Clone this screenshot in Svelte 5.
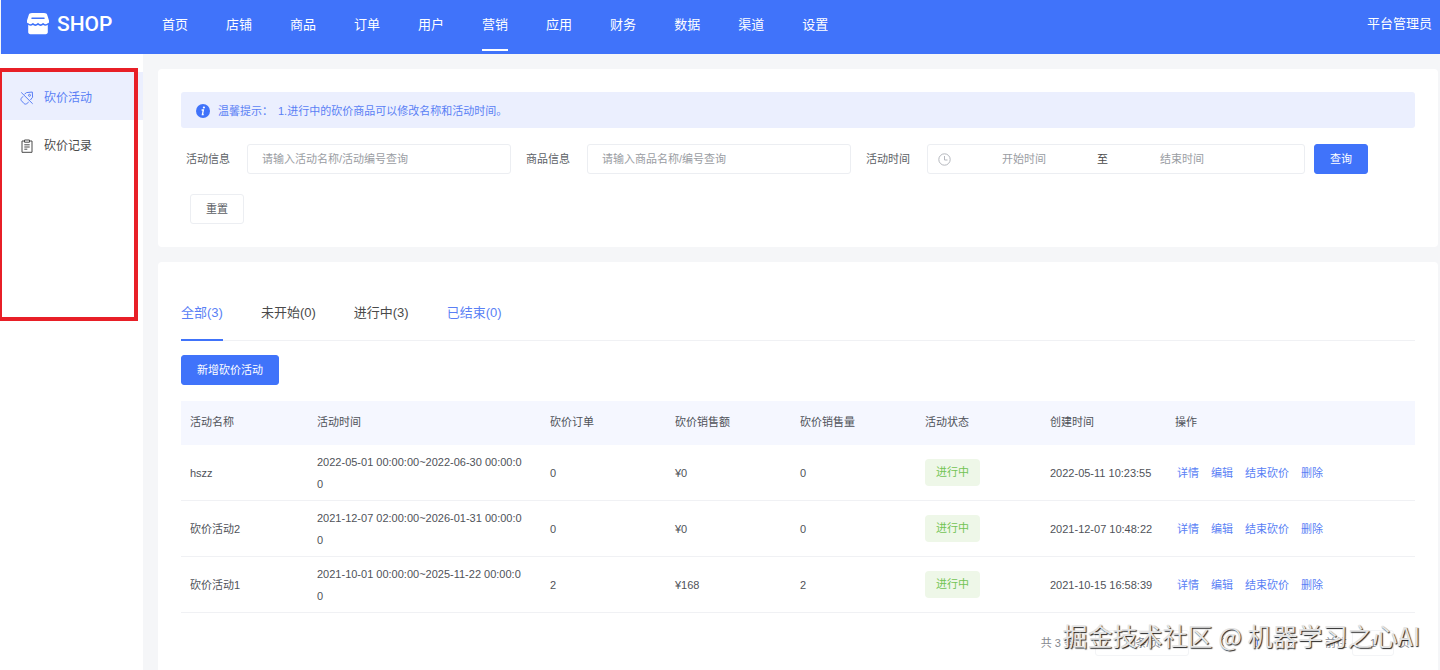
<script lang="ts">
	interface Activity {
		name: string;
		time: string;
		orders: number;
		amount: string;
		sales: number;
		status: string;
		created: string;
	}

	const navItems = ['首页', '店铺', '商品', '订单', '用户', '营销', '应用', '财务', '数据', '渠道', '设置'];
	const columns = ['活动名称', '活动时间', '砍价订单', '砍价销售额', '砍价销售量', '活动状态', '创建时间', '操作'];
	const actions = ['详情', '编辑', '结束砍价', '删除'];

	const tabs = [
		{ key: 'all', label: '全部(3)' },
		{ key: 'pending', label: '未开始(0)' },
		{ key: 'active', label: '进行中(3)' },
		{ key: 'ended', label: '已结束(0)' }
	];

	const activities: Activity[] = [
		{
			name: 'hszz',
			time: '2022-05-01 00:00:00~2022-06-30 00:00:00',
			orders: 0,
			amount: '¥0',
			sales: 0,
			status: '进行中',
			created: '2022-05-11 10:23:55'
		},
		{
			name: '砍价活动2',
			time: '2021-12-07 02:00:00~2026-01-31 00:00:00',
			orders: 0,
			amount: '¥0',
			sales: 0,
			status: '进行中',
			created: '2021-12-07 10:48:22'
		},
		{
			name: '砍价活动1',
			time: '2021-10-01 00:00:00~2025-11-22 00:00:00',
			orders: 2,
			amount: '¥168',
			sales: 2,
			status: '进行中',
			created: '2021-10-15 16:58:39'
		}
	];

	let activeNav = $state('营销');
	let activeTab = $state('all');
	let activityQuery = $state('');
	let goodsQuery = $state('');
	let startTime = $state('');
	let endTime = $state('');

	function resetFilters() {
		activityQuery = '';
		goodsQuery = '';
		startTime = '';
		endTime = '';
	}
</script>

<div class="app">
	<!-- Top bar -->
	<header class="topbar">
		<a class="brand" href="#home">
			<svg width="22" height="22" viewBox="0 0 22 22" aria-hidden="true">
				<path
					fill="#fff"
					d="M5 0h12c2 0 3 .8 3.400 2.400L22 7.500v1.300c0 1-.5 1.700-1.200 2.100V19c0 1.400-.8 2.200-2.200 2.200H3.400C2 21.200 1.200 20.400 1.200 19v-8.100C.5 10.500 0 9.800 0 8.800V7.500l1.600-5.100C2 .8 3 0 5 0z"
				/>
				<path
					fill="none"
					stroke="#4073fa"
					stroke-width="1.500"
					stroke-linecap="round"
					d="M5 5.200h12M.8 10.800c1.700 1.500 3.600 1.400 5.100.1 1.500 1.500 3.500 1.500 5.100 0 1.600 1.500 3.600 1.500 5.100 0 1.500 1.300 3.400 1.400 5.100-.1"
				/>
			</svg>
			<span>SHOP</span>
		</a>
		<nav class="main-nav">
			{#each navItems as item}
				<a href="#nav" class:active={item === activeNav} onclick={() => (activeNav = item)}>{item}</a>
			{/each}
		</nav>
		<span class="user">平台管理员</span>
	</header>

	<div class="body">
		<!-- Side menu -->
		<aside class="sidebar">
			<a class="side-item active" href="#activity">
				<svg width="14" height="14" viewBox="0 0 14 14" fill="none" stroke="currentColor" aria-hidden="true">
					<path d="M4.500 3.200 6.500 1.600 12.300 1l.3 5.200-2.200 2.800M8.700 11 6.800 12.600c-.9.700-1.900.7-2.700 0L1.500 9.800c-.8-.9-.8-1.900 0-2.700L3 5.300M1.200 1.400l11.500 11.400" />
					<circle cx="9.500" cy="4.300" r="1" />
				</svg>
				<span>砍价活动</span>
			</a>
			<a class="side-item" href="#records">
				<svg width="14" height="14" viewBox="0 0 14 14" fill="none" stroke="currentColor" aria-hidden="true">
					<path d="M4.500 2H2v11.300h10V2H9.500M4.500 1h5v2.200h-5zM4.300 5.800h5.400M4.300 8h5.400M4.300 10.200h3" />
				</svg>
				<span>砍价记录</span>
			</a>
			<div class="highlight"></div>
		</aside>

		<main class="content">
			<!-- Filters -->
			<section class="card">
				<div class="notice">
					<svg width="14" height="14" viewBox="0 0 14 14" aria-hidden="true">
						<circle cx="7" cy="7" r="7" fill="#4073fa" />
						<circle cx="7.900" cy="3.500" r="1.100" fill="#fff" />
						<path d="M5.600 6h1.800L6.400 10.500h1.300" fill="none" stroke="#fff" stroke-width="1.300" />
					</svg>
					<span>温馨提示：</span>
					<span>1.进行中的砍价商品可以修改名称和活动时间。</span>
				</div>
				<form class="filter-form" onsubmit={(e) => e.preventDefault()}>
					<div class="field">
						<label for="activity">活动信息</label>
						<input id="activity" class="text-input" placeholder="请输入活动名称/活动编号查询" bind:value={activityQuery} />
					</div>
					<div class="field">
						<label for="goods">商品信息</label>
						<input id="goods" class="text-input" placeholder="请输入商品名称/编号查询" bind:value={goodsQuery} />
					</div>
					<div class="field last">
						<label for="start">活动时间</label>
						<div class="date-range">
							<svg width="13" height="13" viewBox="0 0 13 13" fill="none" stroke="#b4b7bd" aria-hidden="true">
								<circle cx="6.500" cy="6.500" r="5.700" />
								<path d="M6.500 3v4h3" />
							</svg>
							<input id="start" placeholder="开始时间" bind:value={startTime} />
							<span>至</span>
							<input id="end" aria-label="结束时间" placeholder="结束时间" bind:value={endTime} />
						</div>
					</div>
					<button class="btn primary" type="submit">查询</button>
					<button class="btn" type="button" onclick={resetFilters}>重置</button>
				</form>
			</section>

			<!-- Activity list -->
			<section class="card list">
				<div class="tabs" role="tablist">
					{#each tabs as tab}
						<button
							role="tab"
							type="button"
							class:active={tab.key === activeTab}
							class:hovered={tab.key === 'ended'}
							aria-selected={tab.key === activeTab}
							onclick={() => (activeTab = tab.key)}
						>
							{tab.label}
						</button>
					{/each}
				</div>
				<button class="btn primary add" type="button">新增砍价活动</button>
				<table>
					<colgroup>
						<col class="col-name" />
						<col class="col-time" />
						<col class="col-data" span="5" />
						<col />
					</colgroup>
					<thead>
						<tr>
							{#each columns as column}
								<th>{column}</th>
							{/each}
						</tr>
					</thead>
					<tbody>
						{#each activities as row}
							<tr>
								<td>{row.name}</td>
								<td class="time">{row.time}</td>
								<td>{row.orders}</td>
								<td>{row.amount}</td>
								<td>{row.sales}</td>
								<td><span class="tag">{row.status}</span></td>
								<td class="created">{row.created}</td>
								<td>
									<div class="actions">
										{#each actions as action}
											<a href="#action">{action}</a>
										{/each}
									</div>
								</td>
							</tr>
						{/each}
					</tbody>
				</table>
				<div class="pagination">
					<span>共 3 条</span>
					<select aria-label="每页条数">
						<option>20条/页</option>
					</select>
					<div class="pager">
						<button type="button" aria-label="上一页">
							<svg width="7" height="10" viewBox="0 0 7 10" fill="none" stroke="#b4b7bd"><path d="M6 1 2 5l4 4" /></svg>
						</button>
						<button class="current" type="button">1</button>
						<button type="button" aria-label="下一页">
							<svg width="7" height="10" viewBox="0 0 7 10" fill="none" stroke="#b4b7bd"><path d="m1 1 4 4-4 4" /></svg>
						</button>
					</div>
					<div class="jump">
						<label for="page">前往</label>
						<input id="page" value="1" />
						<span>页</span>
					</div>
				</div>
			</section>
		</main>
	</div>

	<div class="watermark">掘金技术社区 @ 机器学习之心AI</div>
</div>

<style>
	:global(body) {
		background: #f5f6f8;
	}

	.app {
		position: relative;
		display: flex;
		flex-direction: column;
		min-height: 100vh;
		overflow: hidden;
		font-family: 'Liberation Sans', 'Noto Sans CJK SC', sans-serif;
		font-size: 11px;
		line-height: 22px;
		color: #5c5f66;
	}

	.app * {
		box-sizing: border-box;
	}

	a {
		color: inherit;
		text-decoration: none;
	}

	button,
	input,
	select {
		font: inherit;
		color: inherit;
	}

	/* Top bar */
	.topbar {
		display: flex;
		align-items: flex-start;
		height: 54px;
		margin-left: 1px;
		padding: 0 8px 0 26px;
		background: #4073fa;
		color: #fff;
		font-size: 13px;
	}

	.brand {
		display: flex;
		align-items: center;
		gap: 8px;
		width: 135px;
		height: 48px;
		font-family: Roboto, sans-serif;
		font-size: 21px;
		font-weight: 500;
	}

	.main-nav {
		display: flex;
		flex: 1;
		gap: 38px;
	}

	.main-nav a {
		height: 51px;
		border-bottom: 2px solid transparent;
		line-height: 50px;
	}

	.main-nav a.active {
		border-bottom-color: #fff;
	}

	.user {
		line-height: 48px;
	}

	.body {
		display: flex;
		flex: 1;
	}

	/* Side menu */
	.sidebar {
		position: relative;
		flex: 0 0 143px;
		padding-top: 18px;
		background: #fff;
		font-size: 12px;
	}

	.side-item {
		display: flex;
		align-items: center;
		gap: 10px;
		height: 48px;
		padding: 4px 20px 0;
		color: #4a4a4a;
	}

	.side-item.active {
		background: #ebeffe;
		color: #5a7ff5;
	}

	.highlight {
		position: absolute;
		top: 14px;
		left: 0;
		width: 138px;
		height: 253px;
		border: 4px solid #e81f27;
		border-left-width: 2px;
		pointer-events: none;
	}

	/* Content */
	.content {
		display: flex;
		flex: 1;
		flex-direction: column;
		gap: 15px;
		min-width: 0;
		padding: 15px 2px 0 15px;
	}

	.card {
		padding: 23px;
		border-radius: 4px;
		background: #fff;
	}

	.notice {
		display: flex;
		align-items: center;
		height: 36px;
		padding: 2px 15px 0;
		border-radius: 3px;
		background: #ebeffe;
		color: #5a7ff5;
	}

	.notice svg {
		margin-right: 8px;
	}

	.notice span {
		padding-right: 5px;
	}

	.filter-form {
		display: flex;
		flex-wrap: wrap;
		row-gap: 20px;
		margin-top: 16px;
	}

	.field {
		display: flex;
		align-items: center;
		gap: 15px;
		margin: 0 10px 0 5px;
	}

	.field.last {
		margin-right: 0;
	}

	.field label {
		width: 46px;
	}

	.text-input,
	.date-range {
		width: 264px;
		height: 30px;
		padding: 0 14px;
		border: 1px solid #eceef2;
		border-radius: 3px;
		background: #fff;
	}

	.date-range {
		display: flex;
		align-items: center;
		width: 378px;
		padding: 0 10px;
	}

	.date-range input {
		width: 146px;
		padding: 0;
		border: 0;
		background: none;
		text-align: center;
	}

	.date-range span {
		width: 12px;
		white-space: nowrap;
		color: #4a4a4a;
	}

	input::placeholder {
		color: #9a9da3;
		opacity: 1;
	}

	.btn {
		height: 30px;
		margin-left: 9px;
		padding: 0 15px;
		border: 1px solid #eceef2;
		border-radius: 3px;
		background: #fff;
		cursor: pointer;
	}

	.btn.primary {
		border-color: #4073fa;
		background: #4073fa;
		color: #fff;
	}

	/* List */
	.list {
		flex: 1;
		padding-bottom: 12px;
		border-radius: 4px 4px 0 0;
	}

	.tabs {
		display: flex;
		gap: 38px;
		border-bottom: 1px solid #f0f1f4;
		font-size: 13px;
	}

	.tabs button {
		height: 56px;
		margin-bottom: -1px;
		padding: 2px 0 0;
		border: 0;
		border-bottom: 2px solid transparent;
		background: none;
		color: #4a4a4a;
		cursor: pointer;
	}

	.tabs button.active {
		border-bottom-color: #4073fa;
	}

	.tabs button.active,
	.tabs button.hovered {
		color: #5a7ff5;
	}

	.btn.add {
		display: block;
		margin: 14px 0 16px;
	}

	table {
		width: 100%;
		border-collapse: separate;
		border-spacing: 0;
		table-layout: fixed;
	}

	.col-name {
		width: 127px;
	}

	.col-time {
		width: 233px;
	}

	.col-data {
		width: 125px;
	}

	th {
		height: 44px;
		padding: 0 9px 2px;
		background: #f5f7ff;
		color: #4f5259;
		font-weight: 400;
		text-align: left;
	}

	td {
		height: 56px;
		padding: 5px 9px;
		border-bottom: 1px solid #f0f1f4;
		color: #4f5259;
	}

	td.time {
		padding-right: 18px;
		word-break: break-all;
	}

	td.created {
		white-space: nowrap;
	}

	.tag {
		display: inline-block;
		height: 27px;
		padding: 0 11px;
		border-radius: 4px;
		background: #eef7e8;
		color: #73c454;
		line-height: 27px;
	}

	.actions {
		display: flex;
		gap: 12px;
		padding-left: 2px;
		color: #5a7ff5;
	}

	/* Pagination */
	.pagination {
		display: flex;
		align-items: center;
		justify-content: flex-end;
		gap: 20px;
		margin-top: 17px;
		padding-right: 5px;
		color: #85888e;
	}

	.pagination select,
	.pagination input {
		width: 94px;
		height: 26px;
		border: 1px solid #f3f4f6;
		border-radius: 3px;
		background: #fff;
		text-align: center;
		appearance: none;
	}

	.pagination input {
		width: 42px;
	}

	.pager {
		display: flex;
		gap: 12px;
	}

	.pager button {
		width: 24px;
		padding: 0;
		border: 0;
		background: none;
	}

	.pager .current {
		color: #4073fa;
	}

	.jump {
		display: flex;
		align-items: center;
		gap: 5px;
	}

	/* Watermark */
	.watermark {
		position: absolute;
		right: 20px;
		bottom: 17px;
		color: #e4e4e4;
		font-family: 'Noto Sans CJK SC', sans-serif;
		font-size: 25px;
		line-height: 36px;
		text-shadow: 1px 1px 1px #222;
		white-space: nowrap;
		pointer-events: none;
	}
</style>
